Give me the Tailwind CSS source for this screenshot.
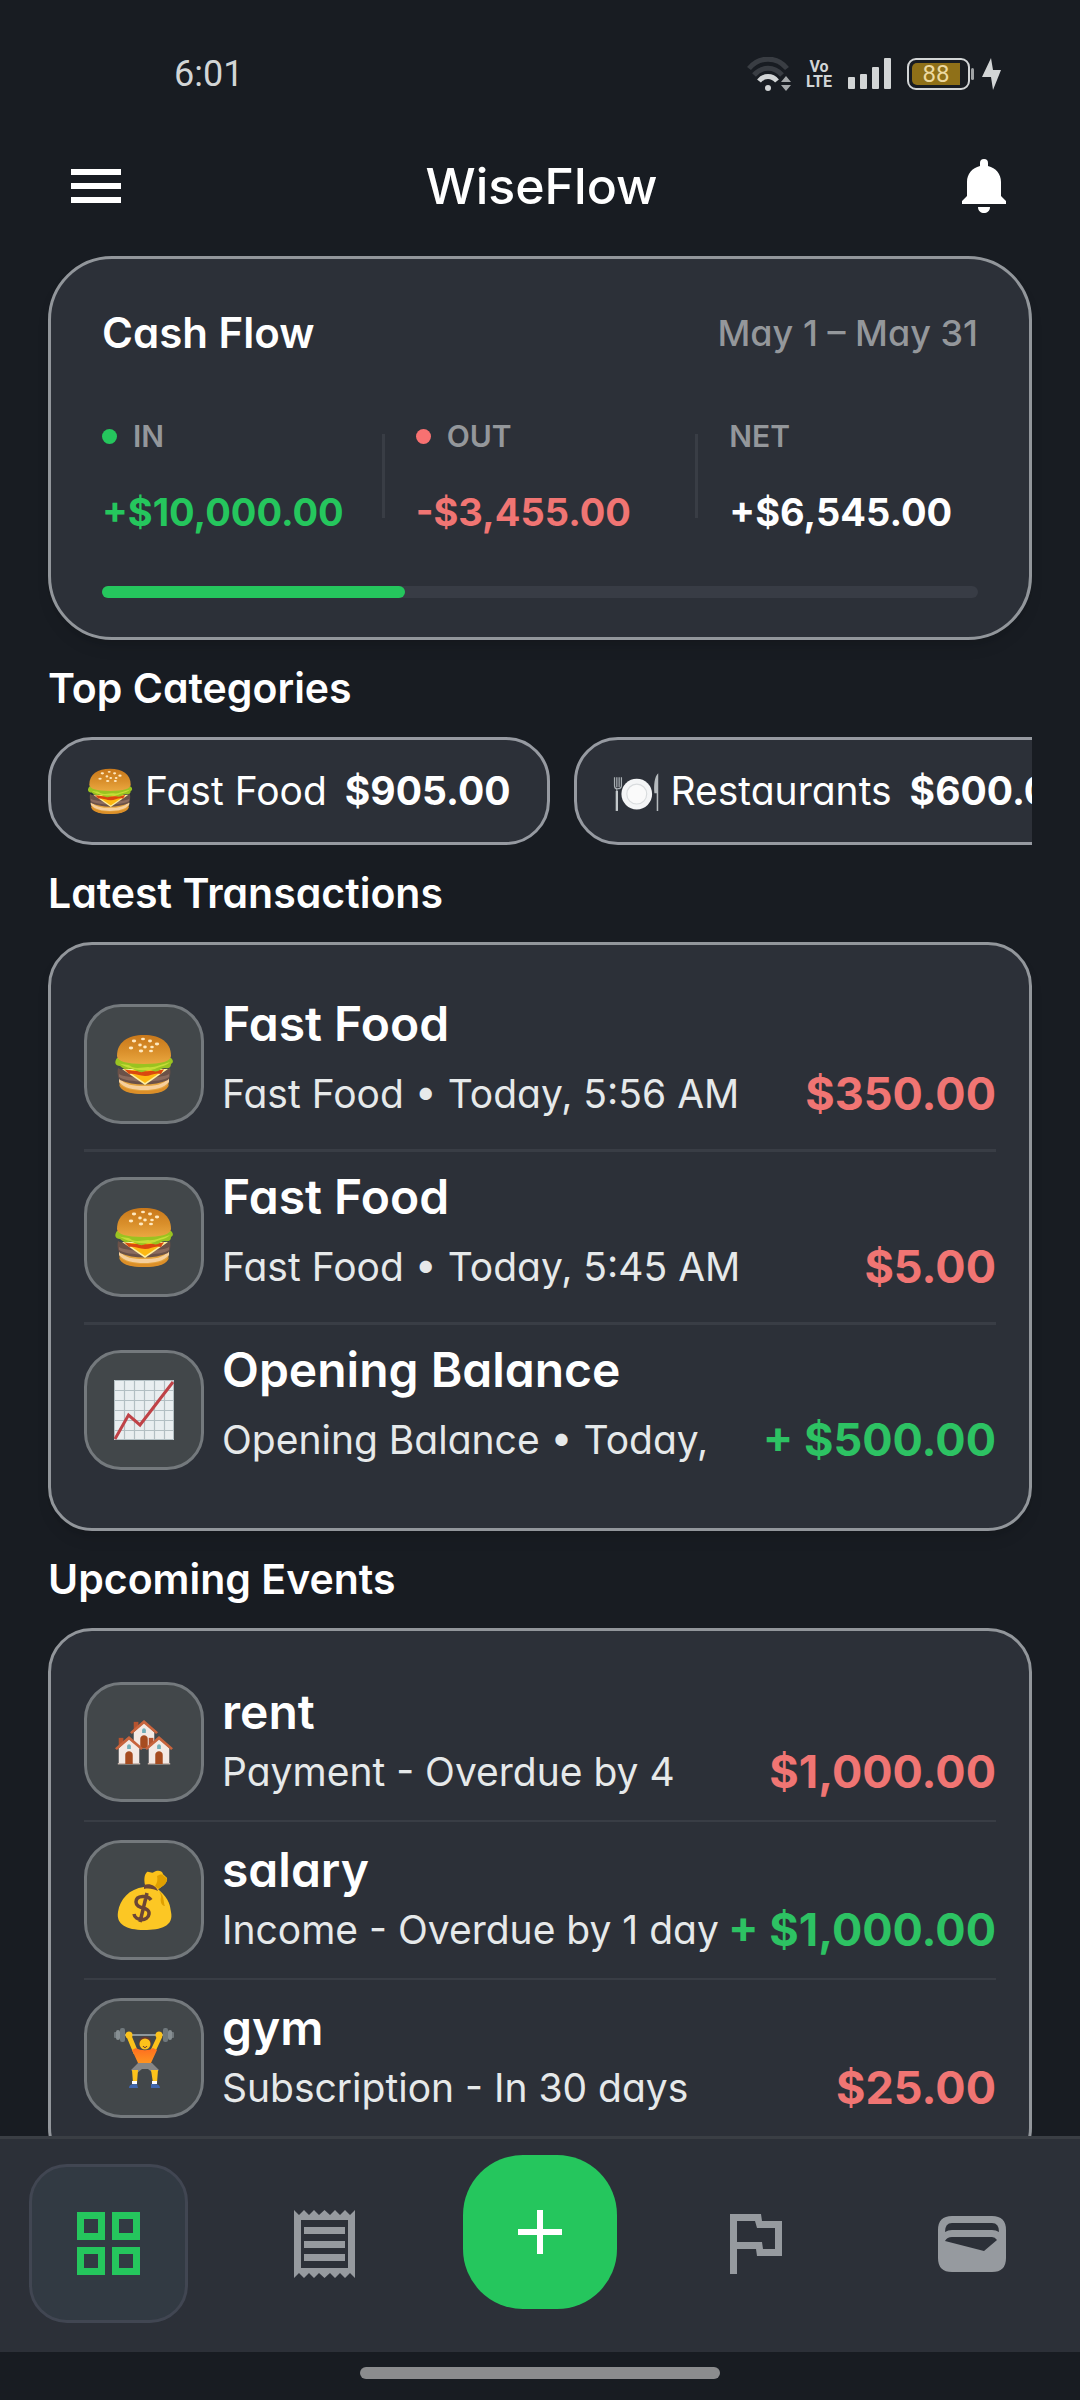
<!DOCTYPE html>
<html lang="en">
<head>
    <meta charset="UTF-8">
    <meta name="viewport" content="width=device-width, initial-scale=1.0">
    <title>WiseFlow</title>
    <!-- Tailwind CSS CDN -->
    <script src="https://cdn.jsdelivr.net/npm/@tailwindcss/browser@4"></script>
</head>
<body class="bg-[#181c22] text-white font-[Inter,'Open_Sans',sans-serif] [font-feature-settings:'cv11']">

    <!-- Category artwork, reused by the chips and the rows -->
    <svg class="absolute w-0 h-0" aria-hidden="true">
        <defs>
            <linearGradient id="bun" x1="0" y1="0" x2="0" y2="1">
                <stop offset="0" stop-color="#c9781a"/>
                <stop offset="0.55" stop-color="#d98f2b"/>
                <stop offset="1" stop-color="#eaa740"/>
            </linearGradient>
            <linearGradient id="shirt" x1="0" y1="0" x2="0" y2="1">
                <stop offset="0" stop-color="#ff6d1f"/>
                <stop offset="1" stop-color="#ff9420"/>
            </linearGradient>
        </defs>
        <symbol id="burger" viewBox="0 0 60 60">
            <path d="M5 46c0 9 9 14 25 14s25-5 25-14l-3-4H8z" fill="#e3a33f"/>
            <path d="M5 44c6 7 14 8 25 8s19-1 25-8v4c-5 6-14 8-25 8S10 54 5 48z" fill="#f6cf9c"/>
            <path d="M5 50c6 5 14 7 25 7s20-2 25-7c-1 7-10 10-25 10S6 57 5 50z" fill="#dc8f28"/>
            <path d="M4 34c8 5 44 5 52 0 1 5 0 10-2 12-14 6-34 6-48 0-2-2-3-7-2-12z" fill="#6b5148"/>
            <path d="M5 40c8 5 42 5 50 0v3c-8 6-42 6-50 0z" fill="#8b6b5e"/>
            <path d="M8 35h46L31 51z" fill="#fff0a0"/>
            <path d="M12 36h38L31 49z" fill="#fdb813"/>
            <path d="M10 35c6 3 34 3 40 0l-3 5c-6-2-10 2-16 2s-11-3-16-2z" fill="#d9480f"/>
            <path d="M3 24h54c3 3 2 5 0 6 0 4-3 5-6 4-5 0-6 5-12 3-6-3-8 2-13 1-5-1-7-4-11-3-5 1-6-1-9-3-5 0-6-4-3-8z" fill="#9ac321"/>
            <path d="M3 28c6 4 10 1 15 5 5 2 12 0 16 0 6 1 12-2 22-5-3 4-10 4-15 7-6 2-10 1-16 1-8-1-14-3-22-8z" fill="#c5dd35"/>
            <path d="M3 22C3 8 14 1 30 1s27 7 27 21c0 5-9 8-27 8S3 27 3 22z" fill="url(#bun)"/>
            <g fill="#ffe9c0">
                <ellipse cx="20" cy="7" rx="2.2" ry="1.4"/><ellipse cx="29" cy="5" rx="2" ry="1.2"/>
                <ellipse cx="36" cy="7" rx="2" ry="1.4"/><ellipse cx="43" cy="10" rx="2.2" ry="1.4"/>
                <ellipse cx="17" cy="14" rx="2.2" ry="1.4"/><ellipse cx="26" cy="11" rx="1.8" ry="1.4"/>
                <ellipse cx="31" cy="13" rx="1.8" ry="1.4"/><ellipse cx="38" cy="13" rx="1.8" ry="1.2"/>
                <ellipse cx="27" cy="17" rx="2.2" ry="1.4"/><ellipse cx="37" cy="17" rx="2" ry="1.2"/>
            </g>
        </symbol>
        <symbol id="plate" viewBox="0 0 60 60">
            <circle cx="31" cy="34" r="20" fill="#f4f5f6"/>
            <circle cx="31" cy="34" r="13" fill="#fafafa" stroke="#d9dcde" stroke-width="1.5"/>
            <path d="M2 12v11c0 3 1 4 3 4v28M5 12v13M8 12v13M11 12v11c0 3-1 4-5 4" fill="none" stroke="#a9afb3" stroke-width="1.6"/>
            <path d="M5 30v26" stroke="#c3c8cb" stroke-width="3"/>
            <path d="M59 7c-5 4-6 16-5 26h3v23h2z" fill="#b5babd"/>
        </symbol>
        <symbol id="chart" viewBox="0 0 60 60">
            <path d="M0 0h60v60H0z" fill="#e9eef0"/>
            <path d="M10.500 0v60M20.500 0v60M30.500 0v60M40.500 0v60M50.500 0v60M0 10.500h60M0 20.500h60M0 30.500h60M0 40.500h60M0 50.500h60" stroke="#b3bfc3" stroke-width="1.200"/>
            <path d="M.5.5h59v59H.5z" fill="none" stroke="#b3bfc3"/>
            <path d="M1 59l13.500-24L26 45 59 2" fill="none" stroke="#bf4247" stroke-width="3"/>
        </symbol>
        <symbol id="house" viewBox="0 0 30 32">
            <path d="M4 3h5v9H4z" fill="#b5532f"/>
            <path d="M4 14L15 4l11 10v17H4z" fill="#f3e9e4"/>
            <path d="M3 30h24v1.500H3z" fill="#c9b7ae"/>
            <path d="M15 1L0 14l2 2L15 5l13 11 2-2z" fill="#c8643d"/>
            <path d="M11 31V21c0-5 8-5 8 0v10z" fill="#a64c20"/>
            <path d="M13 15v-3c0-3 4-3 4 0v3z" fill="#72aeb8"/>
        </symbol>
        <symbol id="houses" viewBox="0 0 60 60">
            <use href="#house" x="16" y="7" width="28" height="30"/>
            <use href="#house" x="1" y="23" width="28" height="30"/>
            <use href="#house" x="31" y="23" width="28" height="30"/>
        </symbol>
        <symbol id="moneybag" viewBox="0 0 60 60">
            <path d="M31 15c-1-5-1-10 2-13 2-1 5 2 7 0 3-2 8-2 9 2 1 2 5 3 4 6-1 5-6 7-10 10z" fill="#fcc21b"/>
            <path d="M43 6c2-1 4-2 6-1 1 2 4 2 4 5-1 5-6 7-9 9l-3-3c2-3 3-6 2-10z" fill="#e0a000"/>
            <path d="M30 17c5-3 12-1 15 3 11 10 11 16 12 22 3 14-10 18-27 18C12 60 2 54 4 42c2-13 11-23 26-25z" fill="#fcc724"/>
            <path d="M45 21c6 5 4 11 6 15-4 0-5-6-4-9 0-3-1-4-2-6z" fill="#e0a000"/>
            <path d="M30 15c5-2 12 0 14 6-4-2-9-3-14-2z" fill="#6b4536"/>
            <path d="M37 30c-3-5-15-5-15 2 0 8 14 4 13 12-1 8-14 7-15 0M33 23l-7 29" fill="none" stroke="#6b4536" stroke-width="3.500"/>
        </symbol>
        <symbol id="lifter" viewBox="0 0 60 60">
            <path d="M6 7h48" stroke="#8d979c" stroke-width="2"/>
            <rect x="0" y="4" width="3" height="6" rx="1" fill="#6f777b"/>
            <rect x="2" y="2" width="4" height="10" rx="2" fill="#868e92"/>
            <rect x="6" y="0" width="5" height="14" rx="2" fill="#70787c"/>
            <rect x="57" y="4" width="3" height="6" rx="1" fill="#6f777b"/>
            <rect x="54" y="2" width="4" height="10" rx="2" fill="#868e92"/>
            <rect x="49" y="0" width="5" height="14" rx="2" fill="#70787c"/>
            <path d="M15 8l7 17M46 8l-8 17" stroke="#fcc21b" stroke-width="5"/>
            <circle cx="15" cy="7" r="3.500" fill="#fcc21b"/><circle cx="45" cy="7" r="3.500" fill="#fcc21b"/>
            <path d="M25 14c0-7 12-7 12 0v4H25z" fill="#6b3a2e"/>
            <path d="M18 22l4-2c5 3 13 3 17 0l4 2-6 13H24z" fill="url(#shirt)"/>
            <circle cx="31" cy="16" r="5.500" fill="#fcc21b"/>
            <path d="M29 18c1 2 3 2 4 0" stroke="#6b3a2e" fill="none"/>
            <path d="M24 35h14l7 7-5 4-6-5h-6l-6 5-5-4z" fill="#868686"/>
            <path d="M18 42h6l-1 13h-4zM44 42h-7l2 13h4z" fill="#fcc21b"/>
            <path d="M18 53h5v3h-5zM38 53h5v3h-5z" fill="#fff"/>
            <path d="M15 60c0-4 4-4 8-4l1 4zM46 60c0-4-4-4-9-4v4z" fill="#3f66ae"/>
        </symbol>
    </svg>

    <div class="h-screen flex flex-col overflow-hidden">
        <!-- Status bar -->
        <div class="h-[147px] shrink-0 flex items-center justify-between pl-[174px] pr-[79px] font-[Roboto,sans-serif] text-[#d2d5d6]">
            <span class="text-[36px] leading-10">6:01</span>
            <div class="flex items-center">
                <svg class="w-[46px] h-[34px]" viewBox="0 0 46 34" fill="none">
                    <path d="M2 11.500C12-1 30-1 40 11.500" stroke="#393d43" stroke-width="5"/>
                    <path d="M7 18c8-9 20-9 28 0" stroke="#393d43" stroke-width="5"/>
                    <path d="M12 24c5-6 13-6 18 0" stroke="#d2d5d6" stroke-width="5"/>
                    <circle cx="21" cy="31" r="3" fill="#d2d5d6"/>
                    <path d="M34 25l5-6 5 6zM34 28h10l-5 6z" fill="#a5a8aa"/>
                </svg>
                <span class="ml-[13px] w-[26px] text-[16px] leading-[15px] font-bold text-center font-['Liberation_Sans_Narrow',Roboto,sans-serif]">Vo<br>LTE</span>
                <svg class="ml-4 w-[43px] h-[31px]" viewBox="0 0 43 31" fill="#d2d5d6">
                    <rect x="0" y="19" width="7" height="12" rx="1"/>
                    <rect x="12" y="16" width="7" height="15" rx="1"/>
                    <rect x="24" y="9" width="7" height="22" rx="1"/>
                    <rect x="36" y="0" width="7" height="31" rx="1"/>
                </svg>
                <div class="ml-4 w-[63px] h-8 rounded-[9px] border-2 border-[#d2d5d6] p-[3px]">
                    <div class="w-[48px] h-full rounded-l-[5px] bg-[#8f7018] flex items-center justify-center text-[24px] leading-6 text-[#ecd9a2]">88</div>
                </div>
                <div class="ml-px w-[3px] h-3 rounded-full bg-[#9fa2a4]"></div>
                <svg class="ml-2 w-[19px] h-[32px]" viewBox="0 0 19 32" fill="#d2d5d6"><path d="M9 0L0 19h9l2 13 8-20h-8z"/></svg>
            </div>
        </div>

        <!-- App bar -->
        <header class="h-[78px] shrink-0 flex items-center justify-between pl-[71px] pr-[74px]">
            <button type="button" aria-label="Menu">
                <svg class="w-[50px] h-[34px]" viewBox="0 0 50 34" fill="#fff"><path d="M0 0h50v6H0zM0 14h50v6H0zM0 28h50v6H0z"/></svg>
            </button>
            <h1 class="text-[50px] leading-[60px] font-medium">WiseFlow</h1>
            <button type="button" aria-label="Notifications">
                <svg class="w-[44px] h-[54px]" viewBox="0 0 44 54" fill="#fff">
                    <path d="M18 7V4a4 4 0 0 1 8 0v3c8 2 13 8 13 16v14l5 5v3H0v-3l5-5V23C5 15 10 9 18 7zM16 48h12c0 8-12 8-12 0z"/>
                </svg>
            </button>
        </header>

        <main class="flex-1 min-h-0 overflow-hidden px-12 pt-[31px]">
            <!-- Cash flow -->
            <section class="rounded-[64px] border-3 border-[#92969b] bg-[#2c3038] px-[51px] pt-[50px] pb-[39px] shadow-lg">
                <div class="flex items-center justify-between">
                    <h2 class="text-[42px] leading-[48px] font-semibold">Cash Flow</h2>
                    <span class="text-[36px] leading-[48px] font-medium text-[#94979b]">May 1 – May 31</span>
                </div>
                <div class="mt-[59px] flex items-center">
                    <div class="flex-1 basis-0">
                        <div class="flex items-center gap-4 text-[30px] leading-10 font-semibold text-[#94979b]">
                            <span class="w-[15px] h-[15px] rounded-full bg-[#25c65d]"></span>IN
                        </div>
                        <p class="mt-8 text-[38px] leading-[48px] font-bold text-[#25c65d] whitespace-nowrap w-0">+$10,000.00</p>
                    </div>
                    <div class="mx-[31px] w-[3px] h-[84px] bg-[#393d45]"></div>
                    <div class="flex-1 basis-0">
                        <div class="flex items-center gap-4 text-[30px] leading-10 font-semibold text-[#94979b]">
                            <span class="w-[15px] h-[15px] rounded-full bg-[#f87171]"></span>OUT
                        </div>
                        <p class="mt-8 text-[38px] leading-[48px] font-bold text-[#f07573] whitespace-nowrap w-0">-$3,455.00</p>
                    </div>
                    <div class="mx-[31px] w-[3px] h-[84px] bg-[#393d45]"></div>
                    <div class="flex-1 basis-0">
                        <div class="text-[30px] leading-10 font-semibold text-[#94979b]">NET</div>
                        <p class="mt-8 text-[38px] leading-[48px] font-bold whitespace-nowrap w-0">+$6,545.00</p>
                    </div>
                </div>
                <div class="mt-[50px] h-3 rounded-full bg-[#383c45]">
                    <div class="h-full rounded-full bg-[#25c65d]" style="width: 34.55%"></div>
                </div>
            </section>

            <!-- Top categories -->
            <h2 class="py-6 text-[41px] leading-[49px] font-semibold">Top Categories</h2>
            <div class="flex gap-6 overflow-x-auto [scrollbar-width:none]">
                <a href="#fast-food" class="h-[108px] shrink-0 flex items-center rounded-[44px] border-3 border-[#969aa1] bg-[#2c3038] px-9 text-[39px] whitespace-nowrap">
                    <svg class="w-[46px] h-[46px]"><use href="#burger"/></svg>
                    <span class="ml-3">Fast Food</span>
                    <span class="ml-[18px] font-bold">$905.00</span>
                </a>
                <a href="#restaurants" class="h-[108px] shrink-0 flex items-center rounded-[44px] border-3 border-[#969aa1] bg-[#2c3038] px-9 text-[39px] whitespace-nowrap">
                    <svg class="w-[46px] h-[46px]"><use href="#plate"/></svg>
                    <span class="ml-3">Restaurants</span>
                    <span class="ml-[18px] font-bold">$600.00</span>
                </a>
            </div>

            <!-- Latest transactions -->
            <h2 class="py-6 text-[41px] leading-[49px] font-semibold">Latest Transactions</h2>
            <section class="rounded-[44px] border-3 border-[#92969b] bg-[#2c3038] px-[33px] pt-[34px] pb-[33px] shadow-lg">
                <div class="flex items-center gap-[18px] py-[15px] border-b-3 border-[#393d45]">
                    <div class="w-[120px] h-[120px] shrink-0 flex items-center justify-center rounded-[37px] border-3 border-[#74797d] bg-[#42474a]">
                        <svg class="w-[60px] h-[60px]"><use href="#burger"/></svg>
                    </div>
                    <div class="flex-1 min-w-0 pb-[10px]">
                        <h3 class="text-[48px] leading-[60px] font-semibold">Fast Food</h3>
                        <div class="mt-[10px] flex items-center justify-between leading-[60px] whitespace-nowrap">
                            <span class="text-[39px] text-[#e6e9ea]">Fast Food • Today, 5:56 AM</span>
                            <span class="text-[45px] font-bold text-[#f07573]">$350.00</span>
                        </div>
                    </div>
                </div>
                <div class="flex items-center gap-[18px] py-[15px] border-b-3 border-[#393d45]">
                    <div class="w-[120px] h-[120px] shrink-0 flex items-center justify-center rounded-[37px] border-3 border-[#74797d] bg-[#42474a]">
                        <svg class="w-[60px] h-[60px]"><use href="#burger"/></svg>
                    </div>
                    <div class="flex-1 min-w-0 pb-[10px]">
                        <h3 class="text-[48px] leading-[60px] font-semibold">Fast Food</h3>
                        <div class="mt-[10px] flex items-center justify-between leading-[60px] whitespace-nowrap">
                            <span class="text-[39px] text-[#e6e9ea]">Fast Food • Today, 5:45 AM</span>
                            <span class="text-[45px] font-bold text-[#f07573]">$5.00</span>
                        </div>
                    </div>
                </div>
                <div class="flex items-center gap-[18px] py-[15px]">
                    <div class="w-[120px] h-[120px] shrink-0 flex items-center justify-center rounded-[37px] border-3 border-[#74797d] bg-[#42474a]">
                        <svg class="w-[60px] h-[60px]"><use href="#chart"/></svg>
                    </div>
                    <div class="flex-1 min-w-0 pb-[10px]">
                        <h3 class="text-[48px] leading-[60px] font-semibold">Opening Balance</h3>
                        <div class="mt-[10px] flex items-center justify-between leading-[60px] whitespace-nowrap">
                            <span class="text-[39px] text-[#e6e9ea]">Opening Balance • Today,</span>
                            <span class="text-[45px] font-bold text-[#2dc263]">+ $500.00</span>
                        </div>
                    </div>
                </div>
            </section>

            <!-- Upcoming events -->
            <h2 class="py-6 text-[41px] leading-[49px] font-semibold">Upcoming Events</h2>
            <section class="rounded-[44px] border-3 border-[#92969b] bg-[#2c3038] px-[33px] py-[33px]">
                <div class="flex items-center gap-[18px] py-[18px] border-b-2 border-[#393d45]">
                    <div class="w-[120px] h-[120px] shrink-0 flex items-center justify-center rounded-[37px] border-3 border-[#74797d] bg-[#42474a]">
                        <svg class="w-[60px] h-[60px]"><use href="#houses"/></svg>
                    </div>
                    <div class="flex-1 min-w-0">
                        <h3 class="text-[48px] leading-[60px] font-semibold">rent</h3>
                        <div class="flex items-center justify-between leading-[60px] whitespace-nowrap">
                            <span class="text-[39px] text-[#e6e9ea]">Payment - Overdue by 4</span>
                            <span class="text-[45px] font-bold text-[#f07573]">$1,000.00</span>
                        </div>
                    </div>
                </div>
                <div class="flex items-center gap-[18px] py-[18px] border-b-2 border-[#393d45]">
                    <div class="w-[120px] h-[120px] shrink-0 flex items-center justify-center rounded-[37px] border-3 border-[#74797d] bg-[#42474a]">
                        <svg class="w-[60px] h-[60px]"><use href="#moneybag"/></svg>
                    </div>
                    <div class="flex-1 min-w-0">
                        <h3 class="text-[48px] leading-[60px] font-semibold">salary</h3>
                        <div class="flex items-center justify-between leading-[60px] whitespace-nowrap">
                            <span class="text-[39px] text-[#e6e9ea]">Income - Overdue by 1 day</span>
                            <span class="text-[45px] font-bold text-[#2dc263]">+ $1,000.00</span>
                        </div>
                    </div>
                </div>
                <div class="flex items-center gap-[18px] py-[18px]">
                    <div class="w-[120px] h-[120px] shrink-0 flex items-center justify-center rounded-[37px] border-3 border-[#74797d] bg-[#42474a]">
                        <svg class="w-[60px] h-[60px]"><use href="#lifter"/></svg>
                    </div>
                    <div class="flex-1 min-w-0">
                        <h3 class="text-[48px] leading-[60px] font-semibold">gym</h3>
                        <div class="flex items-center justify-between leading-[60px] whitespace-nowrap">
                            <span class="text-[39px] text-[#e6e9ea]">Subscription - In 30 days</span>
                            <span class="text-[45px] font-bold text-[#f07573]">$25.00</span>
                        </div>
                    </div>
                </div>
            </section>
        </main>

        <!-- Bottom navigation -->
        <nav class="h-[216px] shrink-0 grid grid-cols-5 justify-items-center items-start border-t-3 border-[#3a3e44] bg-[#2c3038] pt-4">
            <a href="#home" aria-label="Home" class="mt-[9px] w-[159px] h-[159px] flex items-center justify-center rounded-[38px] border-3 border-[#414652] bg-[#323a43]">
                <svg class="w-[63px] h-[63px]" viewBox="0 0 63 63" fill="none" stroke="#25c65d" stroke-width="7"><path d="M3.500 3.500h21v21h-21zM38.500 3.500h21v21h-21zM3.500 38.500h21v21h-21zM38.500 38.500h21v21h-21z"/></svg>
            </a>
            <a href="#transactions" aria-label="Transactions" class="mt-[9px] w-[159px] h-[159px] flex items-center justify-center">
                <svg class="w-[61px] h-[68px]" viewBox="0 0 61 68" fill="#969a9f">
                    <path fill-rule="evenodd" d="M0 0l5 5 5-5 5 5 5-5 5 5 5.500-5 5.500 5 5-5 5 5 5-5 5 5 5-5v68l-5-5-5 5-5-5-5 5-5-5-5.500 5-5.500-5-5 5-5-5-5 5-5-5-5 5zM7 10v48h47V10z"/>
                    <path d="M10 17h41v7H10zM10 31h41v7H10zM10 44h41v7H10z"/>
                </svg>
            </a>
            <button type="button" aria-label="Add" class="w-[154px] h-[154px] flex items-center justify-center rounded-[60px] bg-[#25c65d]">
                <svg class="w-[44px] h-[44px]" viewBox="0 0 44 44" fill="#fff"><path d="M19 0h6v19h19v6H25v19h-6V25H0v-6h19z"/></svg>
            </button>
            <a href="#goals" aria-label="Goals" class="mt-[9px] w-[159px] h-[159px] flex items-center justify-center">
                <svg class="w-[52px] h-[60px]" viewBox="0 0 52 60" fill="#969a9f">
                    <path fill-rule="evenodd" d="M0 0h31l1 7h20v35H27l-1-7H7v25H0zM7 7v21h25l1 7h12V14H27l-2-7z"/>
                </svg>
            </a>
            <a href="#wallet" aria-label="Wallet" class="mt-[9px] w-[159px] h-[159px] flex items-center justify-center">
                <svg class="w-[68px] h-[56px]" viewBox="0 0 68 56" fill="#969a9f">
                    <path fill-rule="evenodd" d="M14 0h40q14 0 14 14v28q0 14-14 14H14Q0 56 0 42V14Q0 0 14 0zM14 7q-7 0-7 9 3-2 7-2h40q4 0 7 2 0-9-7-9zM14 21q-5 0-7 4l39 10 13-11q-2-3-5-3z"/>
                </svg>
            </a>
        </nav>

        <!-- Gesture bar -->
        <div class="h-12 shrink-0 flex items-center justify-center pb-[6px]">
            <div class="w-1/3 h-3 rounded-full bg-[#8b8c8e]"></div>
        </div>
    </div>
</body>
</html>
